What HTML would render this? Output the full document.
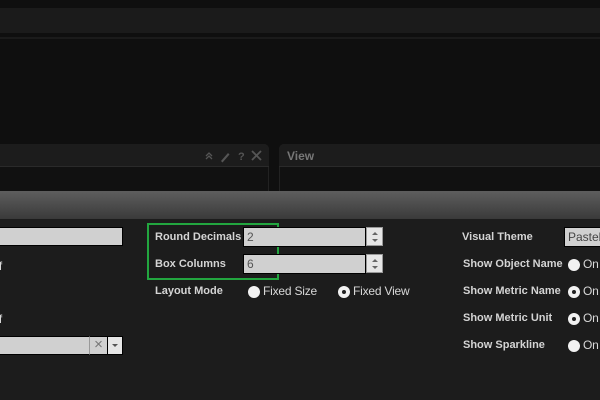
<!DOCTYPE html>
<html><head><style>
*{margin:0;padding:0;box-sizing:border-box}
body{width:600px;height:400px;background:#0f0f0f;position:relative;overflow:hidden;font-family:"Liberation Sans",Arial,sans-serif}
.a{position:absolute}
.lb{position:absolute;font-weight:bold;font-size:11px;color:#d4d4d4}
.tx{position:absolute;font-size:12px;color:#d8d8d8;letter-spacing:-0.2px}
.inp{position:absolute;background:#d0d0d0;border:1px solid #000;font-size:12px;color:#555;padding:2px 3px;line-height:14px}
.rad{position:absolute;width:12px;height:12px;border-radius:50%;background:#f2f2f2}
.rad.on::after{content:"";position:absolute;left:4px;top:4px;width:4px;height:4px;border-radius:50%;background:#222}
.sp{position:absolute;width:17px;height:19px;background:#e6e6e6;border:1px solid #999}
.sp i{position:absolute;left:5px;width:0;height:0;border-left:3px solid transparent;border-right:3px solid transparent}
</style></head><body>
<div class="a" style="left:0;top:8px;width:600px;height:25px;background:#1b1b1b"></div>
<div class="a" style="left:0;top:37px;width:600px;height:2px;background:#1b1b1b"></div>
<!-- left panel -->
<div class="a" style="left:0;top:144px;width:269px;height:48px;background:#111;border:1px solid #222;border-left:none;border-radius:0 5px 0 0"></div>
<div class="a" style="left:0;top:144px;width:269px;height:23px;background:#1c1c1c;border-bottom:1px solid #2a2a2a;border-radius:0 5px 0 0"></div>
<svg class="a" style="left:205px;top:149px" width="60" height="14"><path d="M1 7l3-3 3 3M1 10l3-3 3 3" stroke="#555" stroke-width="1.3" fill="none"/><path d="M16 12l7-8 1.5 1.5-7 8z" fill="#555"/><text x="33" y="11" fill="#555" font-size="11" font-weight="bold" font-family="Liberation Sans">?</text><path d="M47 2l9 9M56 2l-9 9" stroke="#555" stroke-width="1.8"/></svg>
<!-- right panel -->
<div class="a" style="left:279px;top:144px;width:321px;height:48px;background:#111;border:1px solid #222;border-right:none;border-radius:5px 0 0 0"></div>
<div class="a" style="left:279px;top:144px;width:321px;height:23px;background:#1c1c1c;border-bottom:1px solid #2a2a2a;border-radius:5px 0 0 0"></div>
<div class="lb" style="left:287px;top:149px;color:#777;font-size:12px">View</div>
<!-- modal -->
<div class="a" style="left:0;top:191px;width:600px;height:28px;background:linear-gradient(#5e5e5e,#3a3a3a)"></div>
<div class="a" style="left:0;top:219px;width:600px;height:181px;background:#1c1c1c"></div>
<div class="inp" style="left:-2px;top:227px;width:125px;height:19px"></div>
<div class="tx" style="left:-4px;top:259px">ff</div>
<div class="tx" style="left:-4px;top:312px">ff</div>
<div class="inp" style="left:-2px;top:336px;width:92px;height:19px"></div>
<div class="a" style="left:89px;top:336px;width:19px;height:19px;background:#d0d0d0;border:1px solid #000;border-left:1px solid #999;color:#777;font-size:15px;text-align:center;line-height:16px">×</div>
<div class="a" style="left:107px;top:336px;width:16px;height:19px;background:#e6e6e6;border:1px solid #000"><i style="position:absolute;left:4px;top:7px;border-left:3px solid transparent;border-right:3px solid transparent;border-top:3px solid #555"></i></div>
<!-- green -->
<div class="a" style="left:147px;top:223px;width:132px;height:57px;border:2px solid #22a63f"></div>
<div class="lb" style="left:155px;top:231px">Round Decimals</div>
<div class="lb" style="left:155px;top:258px">Box Columns</div>
<div class="inp" style="left:243px;top:227px;width:123px;height:20px">2</div>
<div class="inp" style="left:243px;top:254px;width:123px;height:20px">6</div>
<div class="sp" style="left:366px;top:227px"><i style="top:4px;border-bottom:3px solid #666"></i><i style="top:11px;border-top:3px solid #666"></i></div>
<div class="sp" style="left:366px;top:254px"><i style="top:4px;border-bottom:3px solid #666"></i><i style="top:11px;border-top:3px solid #666"></i></div>
<div class="lb" style="left:155px;top:285px">Layout Mode</div>
<div class="rad" style="left:248px;top:286px"></div>
<div class="tx" style="left:263px;top:284px">Fixed Size</div>
<div class="rad on" style="left:338px;top:286px"></div>
<div class="tx" style="left:353px;top:284px">Fixed View</div>
<!-- right column -->
<div class="lb" style="left:462px;top:231px">Visual Theme</div>
<div class="inp" style="left:564px;top:227px;width:40px;height:20px;color:#444">Pastel</div>
<div class="lb" style="left:463px;top:258px">Show Object Name</div>
<div class="rad" style="left:568px;top:259px"></div><div class="tx" style="left:583px;top:257px">On</div>
<div class="lb" style="left:463px;top:285px">Show Metric Name</div>
<div class="rad on" style="left:568px;top:286px"></div><div class="tx" style="left:583px;top:284px">On</div>
<div class="lb" style="left:463px;top:312px">Show Metric Unit</div>
<div class="rad on" style="left:568px;top:313px"></div><div class="tx" style="left:583px;top:311px">On</div>
<div class="lb" style="left:463px;top:339px">Show Sparkline</div>
<div class="rad" style="left:568px;top:340px"></div><div class="tx" style="left:583px;top:338px">On</div>
</body></html>
